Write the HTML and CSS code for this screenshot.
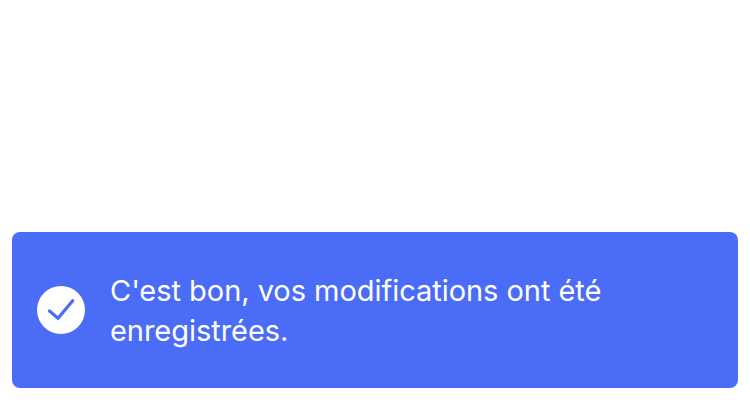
FILE: index.html
```html
<!DOCTYPE html>
<html lang="fr">
<head>
<meta charset="utf-8">
<title>Notification</title>
<link rel="stylesheet" href="styles.css">
</head>
<body>
<div class="toast" role="status">
  <svg class="toast-icon" viewBox="0 0 48 48" aria-hidden="true">
    <circle cx="24" cy="24" r="24" fill="#fff"/>
    <path d="M12.5 25L21 32.2L35.7 14.8" fill="none" stroke="#4b6cf7" stroke-width="3.2" stroke-linecap="round"/>
  </svg>
  <p class="toast-text">C'est bon, vos modifications ont été enregistrées.</p>
</div>
</body>
</html>
```

FILE: styles.css
```css
* { box-sizing: border-box; }
body {
  margin: 0;
  height: 400px;
  padding: 12px;
  display: flex;
  align-items: flex-end;
  background: #fff;
  font-family: Inter, "Liberation Sans", sans-serif;
}
.toast {
  width: 726px;
  height: 156px;
  padding: 0 100px 0 25px;
  display: flex;
  align-items: center;
  gap: 25px;
  border-radius: 8px;
  background: #4b6cf7;
  color: #fff;
}
.toast-icon {
  width: 48px;
  height: 48px;
  flex: none;
}
.toast-text {
  margin: 0;
  padding-top: 2px;
  font-size: 29px;
  font-weight: 400;
  line-height: 40px;
  letter-spacing: -0.04px;
}
```
